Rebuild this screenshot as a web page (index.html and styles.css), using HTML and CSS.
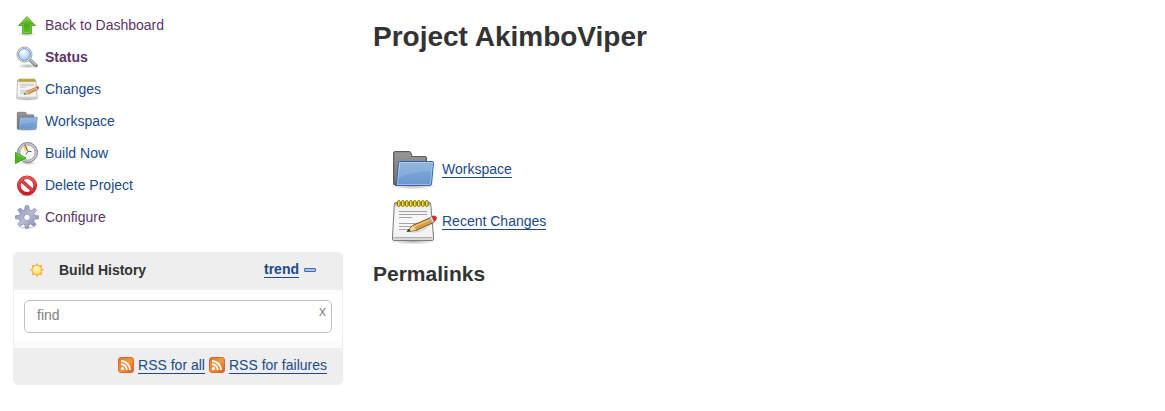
FILE: index.html
```
<!DOCTYPE html>
<html lang="en">
<head>
<meta charset="utf-8">
<meta name="viewport" content="width=device-width, initial-scale=1">
<title>AkimboViper</title>
<link rel="stylesheet" href="styles.css">
</head>
<body>
<svg class="defs" width="0" height="0" aria-hidden="true">
  <defs>
    <linearGradient id="green" x1="0" y1="0" x2="0" y2="1"><stop offset="0" stop-color="#8ad83c"/><stop offset=".5" stop-color="#4da91c"/><stop offset="1" stop-color="#5cc81c"/></linearGradient>
    <linearGradient id="blue" x1="0" y1="0" x2="0" y2="1"><stop offset="0" stop-color="#85addb"/><stop offset="1" stop-color="#6796cf"/></linearGradient>
    <linearGradient id="grey" x1="0" y1="0" x2="0" y2="1"><stop offset="0" stop-color="#8c8c8c"/><stop offset="1" stop-color="#656565"/></linearGradient>
    <linearGradient id="paper" x1="0" y1="0" x2="0" y2="1"><stop offset="0" stop-color="#ededed"/><stop offset=".5" stop-color="#f8f8f8"/><stop offset="1" stop-color="#f0f0f0"/></linearGradient>
    <linearGradient id="orange" x1="0" y1="0" x2="1" y2="1"><stop offset="0" stop-color="#e0702c"/><stop offset=".5" stop-color="#f59b3e"/><stop offset="1" stop-color="#d95b29"/></linearGradient>
    <linearGradient id="red" x1="0" y1="0" x2="0" y2="1"><stop offset="0" stop-color="#ee5a5c"/><stop offset="1" stop-color="#d01a20"/></linearGradient>
    <linearGradient id="steel" x1="0" y1="0" x2="1" y2="1"><stop offset="0" stop-color="#888cb4"/><stop offset=".5" stop-color="#b9bbd6"/><stop offset="1" stop-color="#8084ac"/></linearGradient>
    <radialGradient id="shade"><stop offset="0" stop-color="#000" stop-opacity=".3"/><stop offset="1" stop-color="#000" stop-opacity="0"/></radialGradient>
    <radialGradient id="lens" cx=".4" cy=".35" r=".7"><stop offset="0" stop-color="#f2f8ff"/><stop offset=".6" stop-color="#c5dcf7"/><stop offset="1" stop-color="#8db6e8"/></radialGradient>
    <radialGradient id="sunfill" cx=".4" cy=".35" r=".7"><stop offset="0" stop-color="#fffbd0"/><stop offset="1" stop-color="#fcd94a"/></radialGradient>
    <symbol id="folder" viewBox="0 0 48 48">
      <ellipse cx="24" cy="41" rx="24" ry="3.500" fill="url(#shade)"/>
      <path d="M4.500 39.500V8Q4.500 6.500 6 6.500H20Q21.500 6.500 22 8L23 11.500H36Q37.500 11.500 37.500 13V39.500Z" fill="url(#grey)" stroke="#5c5c5c"/>
      <path d="M6 9H21M6 11H22M6 13H36M6 15H36M6 17H10M6 19H10M6 21H9M6 23H9M6 25H9M6 27H9M6 29H8M6 31H8M6 33H8M6 35H8" stroke="#c4c4c4" stroke-opacity=".45" stroke-width=".8"/>
      <path d="M9.500 17.500Q9.500 16.500 11 16.500H43Q44.500 16.500 44.500 18L42.500 39Q42.300 40.500 40.500 40.500H6Q7.500 40 7.700 38Z" fill="url(#blue)" stroke="#3465a4"/>
      <path d="M10.500 17.500H43.500L41.500 38.500Q41.300 39.500 40 39.500H8.500Z" fill="none" stroke="#fff" stroke-opacity=".35"/>
      <path d="M10 18H43L42 26Q27 26 9 33Z" fill="#fff" opacity=".12"/>
    </symbol>
    <symbol id="notepad" viewBox="0 0 48 48">
      <ellipse cx="24" cy="44.500" rx="23" ry="3" fill="url(#shade)"/>
      <path d="M7 5.500H40Q41.500 5.500 41.700 7L44.500 40V42Q44.500 43.500 43 43.500H5Q3.500 43.500 3.500 42V40L5.300 7Q5.500 5.500 7 5.500Z" fill="url(#paper)" stroke="#7c7c7c"/>
      <path d="M6 6H41L41.500 8.500H5.800Z" fill="#aaa"/>
      <path d="M4.500 40.500H43.500V41.500Q43.500 42.800 42.500 42.800H5.500Q4.500 42.800 4.500 41.500Z" fill="#d2d2d2"/>
      <path d="M4.500 40.500H43.500" stroke="#a4a4a4" stroke-width=".8"/>
      <path d="M10 14.500H38M10 17.500H38M10 20.500H23M10 26.500H34M10 29.500H27M10 32.500H22" stroke="#a4a4a4"/>
      <g fill="#f8df35" stroke="#806b00" stroke-width=".9"><rect x="8.500" y="3.500" width="2.600" height="6" rx="1.300"/><rect x="12.500" y="3.500" width="2.600" height="6" rx="1.300"/><rect x="16.500" y="3.500" width="2.600" height="6" rx="1.300"/><rect x="20.500" y="3.500" width="2.600" height="6" rx="1.300"/><rect x="24.500" y="3.500" width="2.600" height="6" rx="1.300"/><rect x="28.500" y="3.500" width="2.600" height="6" rx="1.300"/><rect x="32.500" y="3.500" width="2.600" height="6" rx="1.300"/><rect x="36.500" y="3.500" width="2.600" height="6" rx="1.300"/></g>
      <path d="M18 34.500Q31 36 44 26Q32 39 18 34.500Z" fill="#000" opacity=".15"/>
      <path d="M18 34.500 23.500 28.500 42 20.500 44.500 25.500 27 33.500Z" fill="#d7a04a" stroke="#79501c"/>
      <path d="M18.500 34.200 23.700 28.800Q26.500 30.500 27 33.200Z" fill="#f0d7a0"/>
      <path d="M25 29.500 41 22.500" stroke="#f2cf80" stroke-width="1.300"/>
      <path d="M18 34.500 20.300 32 21.500 34Z" fill="#222"/>
      <path d="M40.500 20.500 43 19.300 45.300 24.500 43 25.800Z" fill="#d9d9d2" stroke="#888" stroke-width=".5"/>
      <path d="M43 19.300Q46.500 18 47.500 20.500 48 23 45.300 24.500Z" fill="#ef2929" stroke="#c51414" stroke-width=".5"/>
    </symbol>
    <symbol id="rss" viewBox="0 0 16 16">
      <rect x=".5" y=".5" width="15" height="15" rx="2.500" fill="url(#orange)" stroke="#d9682c"/>
      <circle cx="4.500" cy="11.500" r="1.500" fill="#fff"/>
      <path d="M3 7.200A5.800 5.800 0 0 1 8.800 13M3 4A9 9 0 0 1 12 13" fill="none" stroke="#fff" stroke-width="1.900"/>
    </symbol>
  </defs>
</svg>
<div class="page">
  <aside class="side">
    <nav class="tasks" aria-label="Project">
      <a class="task visited" href="#">
        <svg class="icon" viewBox="0 0 24 24"><ellipse cx="12" cy="21" rx="9" ry="2.500" fill="url(#shade)"/><path d="M12 3.500 20.500 12.500H16.500V20.500H7.500V12.500H3.500Z" fill="url(#green)" stroke="#4a9a20" stroke-width=".8" stroke-linejoin="round"/><path d="M12 5 18.500 11.500H15.500V19.500H8.500V11.500H5.500Z" fill="none" stroke="#b5ef7f" stroke-opacity=".3"/></svg>Back to Dashboard</a>
      <a class="task visited current" href="#">
        <svg class="icon" viewBox="0 0 24 24"><ellipse cx="13" cy="21" rx="11" ry="2.500" fill="url(#shade)"/><path d="M15.500 15.500 21 20.500" stroke="#858585" stroke-width="3.600" stroke-linecap="round"/><path d="M15.500 15 20.500 19.500" stroke="#c4c4c4" stroke-width="1.600" stroke-linecap="round"/><circle cx="9.500" cy="9.500" r="7.500" fill="#eee" stroke="#a0a0a0"/><circle cx="9.500" cy="9.500" r="5.900" fill="url(#lens)" stroke="#6d9cd4"/><path d="M5.500 9Q6 5.500 10 5.500" stroke="#fff" stroke-width="1.500" fill="none"/></svg>Status</a>
      <a class="task" href="#"><svg class="icon"><use href="#notepad"/></svg>Changes</a>
      <a class="task" href="#"><svg class="icon"><use href="#folder"/></svg>Workspace</a>
      <a class="task" href="#">
        <svg class="icon" viewBox="0 0 24 24"><ellipse cx="13" cy="22" rx="9" ry="2" fill="url(#shade)"/><circle cx="12.500" cy="11.500" r="10" fill="#cfcfd4" stroke="#77777c"/><circle cx="12.500" cy="11.500" r="7.700" fill="#f5f5f5" stroke="#9a9a9e"/><path d="M8 5.500 12 4 13 9 10.500 11 9 8Z" fill="#f5d96d"/><path d="M9.500 3.500 13 10.500 16.500 10.500M13 10.500 11 13.500" stroke="#666" fill="none"/><path d="M.5 11.500 11 17 .5 22.500Z" fill="#47b51d" stroke="#41a01c"/><path d="M1.500 13.200 8.800 17" stroke="#85dc55"/></svg>Build Now</a>
      <a class="task" href="#">
        <svg class="icon" viewBox="0 0 24 24"><ellipse cx="12" cy="22" rx="10" ry="2" fill="url(#shade)"/><circle cx="12" cy="12.500" r="8.200" fill="#fff" stroke="#b52025" stroke-width="3.600"/><path d="M6.200 7.200 17.800 17.800" stroke="#b52025" stroke-width="3.400"/><circle cx="12" cy="12.500" r="8.200" fill="none" stroke="url(#red)" stroke-width="2.400"/><path d="M6.200 7.200 17.800 17.800" stroke="#e0444a" stroke-width="2.200"/></svg>Delete Project</a>
      <a class="task visited" href="#">
        <svg class="icon" viewBox="0 0 24 24"><ellipse cx="12" cy="22.500" rx="10" ry="1.500" fill="url(#shade)"/><path fill-rule="evenodd" d="M10.300.7H13.700L14.500 5 16.500 5.800 19.700 3.300 21.700 5.300 18.900 8.500 19.700 10.500 23.500 10.800V13.700L19.500 14.300 18.600 16.300 21.200 19.500 18.900 21.600 15.700 19 13.800 19.700 13.300 23.300H10.500L10 19.700 8.100 19 4.900 21.600 2.700 19.200 5.200 16.200 4.400 14.200.5 13.700V10.800L4.500 10.200 5.300 8.200 2.800 5.200 5 3.100 8.100 5.500 9.700 5ZM12 9.200A3.200 3.200 0 1 0 12 15.600A3.200 3.200 0 1 0 12 9.200Z" fill="url(#steel)" stroke="#8083a8" stroke-width=".7" stroke-linejoin="round"/></svg>Configure</a>
    </nav>
    <section class="history">
      <header class="history-head">
        <svg class="sun" viewBox="0 0 16 16"><path d="M8 .8 9.600 3.400 13.200 2.800 12.600 6.400 15.200 8 12.600 9.600 13.200 13.200 9.600 12.600 8 15.200 6.400 12.600 2.800 13.200 3.400 9.600.8 8 3.400 6.400 2.800 2.800 6.400 3.400Z" fill="#f5b04d"/><circle cx="8" cy="8" r="4.700" fill="url(#sunfill)" stroke="#f6b650" stroke-width=".8"/></svg>
        <h2 class="history-title">Build History</h2>
        <a class="link" href="#">trend</a>
        <button class="collapse" type="button" aria-label="Collapse"><svg viewBox="0 0 12 4"><rect x=".5" y=".5" width="11" height="3" rx=".5" fill="#a7c5eb" stroke="#3c6cae"/></svg></button>
      </header>
      <div class="search">
        <input class="find" type="text" placeholder="find" aria-label="Find builds">
        <button class="clear" type="button" aria-label="Clear search">x</button>
      </div>
      <footer class="feeds">
        <svg class="rss"><use href="#rss"/></svg><a class="link" href="#">RSS for all</a>
        <svg class="rss"><use href="#rss"/></svg><a class="link" href="#">RSS for failures</a>
      </footer>
    </section>
  </aside>
  <main class="main">
    <h1 class="title">Project AkimboViper</h1>
    <ul class="actions">
      <li class="action"><svg class="icon-large"><use href="#folder"/></svg><a class="link" href="#">Workspace</a></li>
      <li class="action"><svg class="icon-large"><use href="#notepad"/></svg><a class="link" href="#">Recent Changes</a></li>
    </ul>
    <h2 class="subtitle">Permalinks</h2>
  </main>
</div>
</body>
</html>
```
FILE: styles.css
```
* { box-sizing: border-box; }
body {
  margin: 0;
  background: #fff;
  color: #333;
  font-family: "Liberation Sans", Arial, sans-serif;
  font-size: 14px;
  line-height: 20px;
}
h1, h2, ul { margin: 0; padding: 0; }
svg { display: block; flex: none; }
.defs { position: absolute; }
.page { display: flex; gap: 30px; padding: 9px 13px; }
.side { flex: 0 0 330px; }
.tasks { display: flex; flex-direction: column; align-items: flex-start; margin-bottom: 19px; }
.task {
  display: flex;
  align-items: center;
  gap: 6px;
  height: 32px;
  padding-left: 2px;
  color: #204a87;
  text-decoration: none;
}
.visited { color: #5c3566; }
.current { font-weight: bold; }
.icon { width: 24px; height: 24px; }
.link {
  color: #204a87;
  text-decoration: none;
  border-bottom: 1px solid #204a87;
  line-height: 16px;
}
.history { border: 1px solid #eee; border-radius: 5px; overflow: hidden; }
.history-head {
  display: flex;
  align-items: center;
  height: 37px;
  padding: 0 26px 4px 15px;
  background: #eee;
  font-weight: bold;
}
.sun { width: 16px; height: 16px; }
.history-title { flex: 1; margin-left: 14px; font-size: 14px; line-height: 20px; }
.collapse { margin-left: 5px; padding: 0; border: 0; background: none; }
.collapse svg { width: 12px; height: 4px; }
.search { position: relative; padding: 10px 10px 8px; border-bottom: 7px solid #fbfbfb; }
.find {
  display: block;
  width: 100%;
  height: 33px;
  padding: 0 24px 3px 12px;
  border: 1px solid #c0c0c0;
  border-radius: 5px;
  background: #fff;
  color: #333;
  font: inherit;
}
.find::placeholder { color: #808080; opacity: 1; }
.clear {
  position: absolute;
  top: 12px;
  right: 16px;
  padding: 0;
  border: 0;
  background: none;
  color: #888;
  font: 14px/18px "Liberation Sans", Arial, sans-serif;
}
.feeds {
  display: flex;
  align-items: center;
  justify-content: flex-end;
  gap: 4px;
  height: 36px;
  padding: 0 15px 2px;
  background: #eee;
}
.rss { width: 16px; height: 16px; }
.main { flex: 1; min-width: 0; }
.title { margin-top: 11px; font-size: 28px; line-height: 34px; }
.actions {
  display: flex;
  flex-direction: column;
  gap: 4px;
  margin: 91px 0 16px 16px;
  list-style: none;
}
.action { display: flex; align-items: center; gap: 5px; }
.icon-large { width: 48px; height: 48px; }
.subtitle { font-size: 21px; line-height: 26px; }
```
